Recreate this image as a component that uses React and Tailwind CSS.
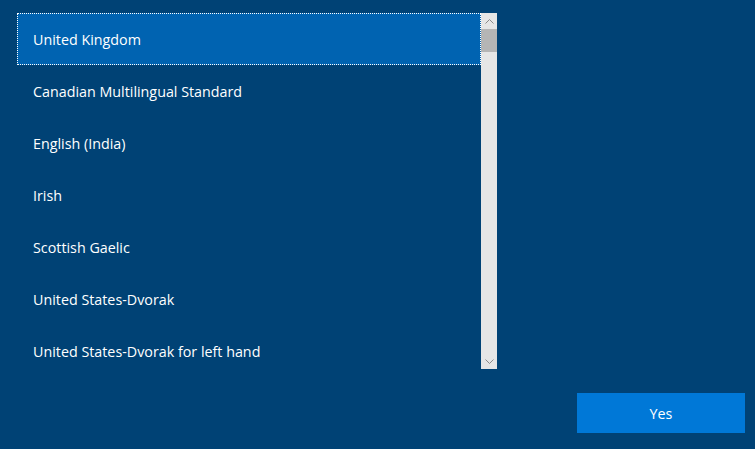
import React from "react";

const layouts = [
  "United Kingdom",
  "Canadian Multilingual Standard",
  "English (India)",
  "Irish",
  "Scottish Gaelic",
  "United States-Dvorak",
  "United States-Dvorak for left hand",
];

const ScrollBar = () => (
  <div className="w-[16px] h-[356px] bg-[#e6e6e6] flex flex-col">
    <div className="h-[16px] flex items-center justify-center">
      <svg width="9" height="5" viewBox="0 0 9 5">
        <path d="M0.5 4.5 L4.5 0.5 L8.5 4.5" fill="none" stroke="#8a8a8a" strokeWidth="1" />
      </svg>
    </div>
    <div className="h-[23px] bg-[#b5b5b5]" />
    <div className="flex-1" />
    <div className="h-[16px] flex items-center justify-center">
      <svg width="9" height="5" viewBox="0 0 9 5">
        <path d="M0.5 0.5 L4.5 4.5 L8.5 0.5" fill="none" stroke="#8a8a8a" strokeWidth="1" />
      </svg>
    </div>
  </div>
);

export default function App() {
  return (
    <div
      className="w-[755px] h-[449px] bg-[#004275] text-white overflow-hidden flex flex-col"
      style={{ fontFamily: '"Open Sans", "Noto Sans", sans-serif' }}
    >
      <div className="flex pl-[17px] pt-[13px]">
        <div className="w-[464px] h-[356px] overflow-hidden">
          {layouts.map((name, i) => (
            <div
              key={name}
              className={`h-[52px] flex items-center pl-[15px] pt-[2px] text-[14.3px] ${
                i === 0 ? "bg-[#0063b1] border border-dotted border-white" : "border border-transparent"
              }`}
            >
              {name}
            </div>
          ))}
        </div>
        <ScrollBar />
      </div>
      <div className="flex justify-end pr-[10px] pt-[24px]">
        <button className="w-[168px] h-[40px] pt-[2px] bg-[#0078d7] text-white text-[14.3px]">Yes</button>
      </div>
    </div>
  );
}
